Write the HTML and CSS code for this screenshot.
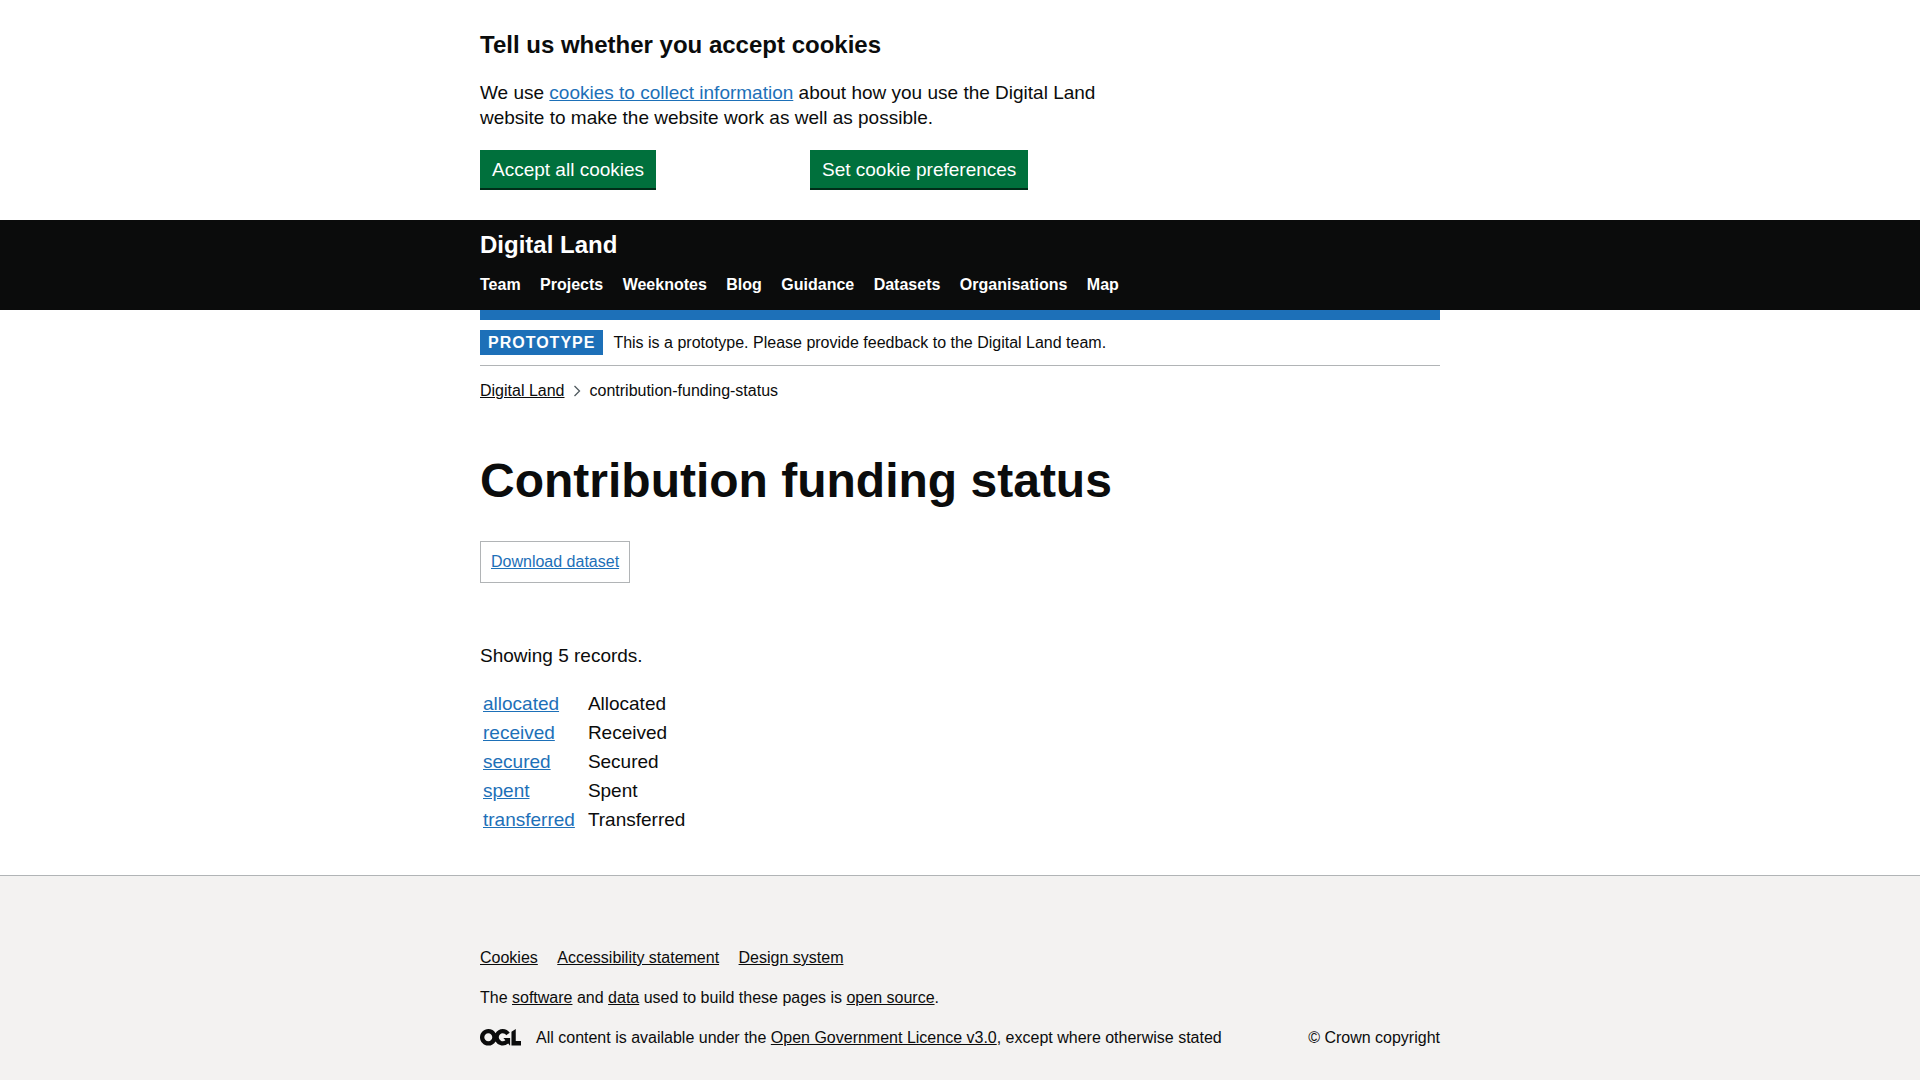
FILE: index.html
```html
<!DOCTYPE html>
<html lang="en">
<head>
  <meta charset="utf-8">
  <meta name="viewport" content="width=device-width, initial-scale=1">
  <title>Contribution funding status | Digital Land</title>
  <link rel="stylesheet" href="styles.css">
</head>
<body>
  <section class="cookie-banner container" aria-label="Cookie banner">
    <h2 class="cookie-banner__title">Tell us whether you accept cookies</h2>
    <p class="cookie-banner__text">We use <a class="link" href="#">cookies to collect information</a> about how you use the Digital Land website to make the website work as well as possible.</p>
    <div class="cookie-banner__actions">
      <button class="button" type="button">Accept all cookies</button>
      <button class="button" type="button">Set cookie preferences</button>
    </div>
  </section>

  <header class="header">
    <div class="container">
      <a class="header__title" href="#">Digital Land</a>
      <nav aria-label="Main">
        <ul class="header__nav">
          <li><a href="#">Team</a></li>
          <li><a href="#">Projects</a></li>
          <li><a href="#">Weeknotes</a></li>
          <li><a href="#">Blog</a></li>
          <li><a href="#">Guidance</a></li>
          <li><a href="#">Datasets</a></li>
          <li><a href="#">Organisations</a></li>
          <li><a href="#">Map</a></li>
        </ul>
      </nav>
    </div>
  </header>

  <div class="container">
    <div class="phase-banner">
      <strong class="tag">Prototype</strong>
      <span>This is a prototype. Please provide feedback to the Digital Land team.</span>
    </div>
    <nav aria-label="Breadcrumb">
      <ol class="breadcrumbs">
        <li><a class="link link--text" href="#">Digital Land</a></li>
        <li>
          <svg class="breadcrumbs__chevron" viewBox="0 0 8 12" aria-hidden="true"><path d="M1.5 1 6.5 6l-5 5" fill="none" stroke="#505a5f" stroke-width="1.3"/></svg>
          contribution-funding-status
        </li>
      </ol>
    </nav>

    <main class="main">
      <h1 class="main__title">Contribution funding status</h1>
      <div class="download"><a class="link" href="#">Download dataset</a></div>
      <p class="main__count">Showing 5 records.</p>
      <table class="records">
        <tbody>
          <tr><td><a class="link" href="#">allocated</a></td><td>Allocated</td></tr>
          <tr><td><a class="link" href="#">received</a></td><td>Received</td></tr>
          <tr><td><a class="link" href="#">secured</a></td><td>Secured</td></tr>
          <tr><td><a class="link" href="#">spent</a></td><td>Spent</td></tr>
          <tr><td><a class="link" href="#">transferred</a></td><td>Transferred</td></tr>
        </tbody>
      </table>
    </main>
  </div>

  <footer class="footer">
    <div class="container footer__inner">
      <ul class="footer__links">
        <li><a class="link link--text" href="#">Cookies</a></li>
        <li><a class="link link--text" href="#">Accessibility statement</a></li>
        <li><a class="link link--text" href="#">Design system</a></li>
      </ul>
      <p>The <a class="link link--text" href="#">software</a> and <a class="link link--text" href="#">data</a> used to build these pages is <a class="link link--text" href="#">open source</a>.</p>
      <div class="footer__licence">
        <svg class="footer__logo" viewBox="0 0 483.2 195.7" preserveAspectRatio="xMidYMin meet" aria-hidden="true"><path fill="currentColor" d="M421.5 142.8V.1l-50.7 32.3v161.1h112.4v-50.7zm-122.3-9.6A47.12 47.12 0 0 1 221 97.8c0-26 21.1-47.1 47.1-47.1 16.7 0 31.4 8.7 39.7 21.8l42.7-27.2A97.63 97.63 0 0 0 268.1 0c-36.5 0-68.3 20.1-85.1 49.7A98 98 0 0 0 97.8 0C43.9 0 0 43.9 0 97.8s43.9 97.8 97.8 97.8c36.5 0 68.3-20.1 85.1-49.7a97.76 97.76 0 0 0 149.6 25.4l19.4 22.2h3v-87.8h-80l24.3 27.5zM97.8 145c-26 0-47.1-21.1-47.1-47.1s21.1-47.1 47.1-47.1 47.1 21.1 47.1 47.1S123.8 145 97.8 145"/></svg>
        <span>All content is available under the <a class="link link--text" href="#">Open Government Licence v3.0</a>, except where otherwise stated</span>
        <span class="footer__copyright">© Crown copyright</span>
      </div>
    </div>
  </footer>
</body>
</html>
```
FILE: styles.css
```css
*,
*::before,
*::after {
  box-sizing: border-box;
}

html {
  background: #f3f2f1;
}

body {
  margin: 0;
  background: #fff;
  color: #0b0c0c;
  font-family: "Liberation Sans", Arial, sans-serif;
  font-size: 19px;
  line-height: 25px;
}

h1,
h2,
p,
ul,
ol {
  margin: 0;
  padding: 0;
}

ul,
ol {
  list-style: none;
}

.container {
  max-width: 960px;
  margin: 0 auto;
}

.link {
  color: #1d70b8;
  text-decoration: underline;
}

.link--text {
  color: #0b0c0c;
}

/* Cookie banner */
.cookie-banner {
  padding: 30px 0;
}

.cookie-banner__title {
  margin-bottom: 20px;
  font-size: 24px;
  line-height: 30px;
}

.cookie-banner__text {
  max-width: 630px;
  margin-bottom: 20px;
}

.cookie-banner__actions {
  display: grid;
  grid-template-columns: 1fr 1fr;
  justify-items: start;
  max-width: 660px;
}

.button {
  padding: 9px 12px 8px;
  border: 0;
  border-bottom: 2px solid #002d18;
  background: #00703c;
  color: #fff;
  font: inherit;
  line-height: 21px;
  cursor: pointer;
}

/* Header */
.header {
  padding: 10px 0 15px;
  background: #0b0c0c;
}

.header a {
  color: #fff;
  font-weight: 700;
  text-decoration: none;
}

.header__title {
  display: block;
  margin-bottom: 15px;
  font-size: 24px;
  line-height: 30px;
}

.header__nav {
  font-size: 16px;
  line-height: 20px;
}

.header__nav li {
  display: inline-block;
  margin-right: 15px;
}

/* Phase banner */
.phase-banner {
  display: flex;
  align-items: center;
  gap: 10px;
  padding: 10px 0;
  border-top: 10px solid #1d70b8;
  border-bottom: 1px solid #b1b4b6;
  font-size: 16px;
  line-height: 20px;
}

.tag {
  padding: 5px 8px 4px;
  background: #1d70b8;
  color: #fff;
  line-height: 16px;
  letter-spacing: 1px;
  text-transform: uppercase;
}

/* Breadcrumbs */
.breadcrumbs {
  display: flex;
  gap: 8px;
  padding-top: 15px;
  font-size: 16px;
  line-height: 20px;
}

.breadcrumbs li {
  display: flex;
  align-items: center;
  gap: 9px;
}

.breadcrumbs__chevron {
  width: 8px;
  height: 12px;
}

/* Main content */
.main {
  padding: 55px 0 40px;
}

.main__title {
  margin-bottom: 35px;
  font-size: 48px;
  line-height: 50px;
}

.download {
  width: fit-content;
  margin-bottom: 60px;
  padding: 10px;
  border: 1px solid #b1b4b6;
  font-size: 16px;
  line-height: 20px;
}

.main__count {
  margin-bottom: 20px;
}

.records {
  border-spacing: 2px;
}

.records td {
  padding: 1px 10px 1px 1px;
}

/* Footer */
.footer {
  padding: 72px 0 25px;
  border-top: 1px solid #b1b4b6;
  background: #f3f2f1;
  font-size: 16px;
  line-height: 20px;
}

.footer__inner {
  display: grid;
  gap: 20px;
}

.footer__links li {
  display: inline-block;
  margin-right: 15px;
}

.footer__licence {
  display: flex;
  align-items: center;
  gap: 15px;
}

.footer__logo {
  flex: none;
  width: 41px;
  height: 18px;
}

.footer__copyright {
  margin-left: auto;
}
```
